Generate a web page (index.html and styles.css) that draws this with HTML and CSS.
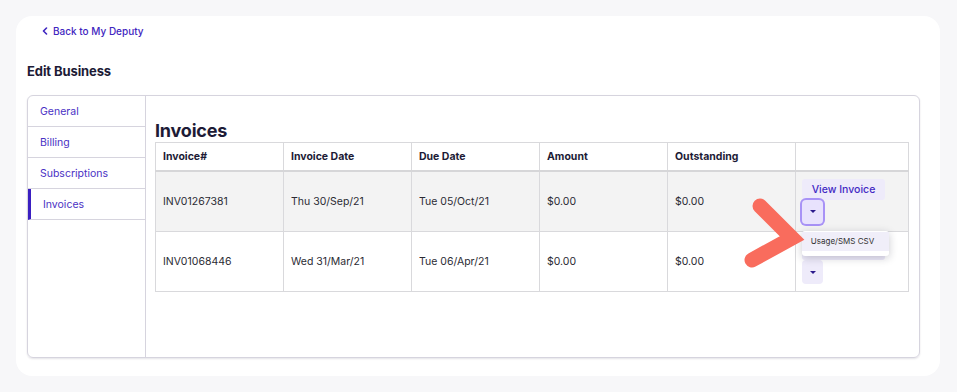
FILE: index.html
```html
<!DOCTYPE html>
<html lang="en">
<head>
    <meta charset="UTF-8">
    <meta name="viewport" content="width=device-width, initial-scale=1.0">
    <title>Edit Business - Invoices</title>
    <link rel="stylesheet" href="styles.css">
</head>
<body>
    <div class="page">
        <a class="back-link" href="#">
            <svg class="back-icon" width="6" height="8" viewBox="0 0 6 8"><path d="M4.5 1 L1.5 4 L4.5 7" fill="none" stroke="currentColor" stroke-width="1.6" stroke-linecap="round" stroke-linejoin="round"/></svg>
            Back to My Deputy
        </a>

        <h2 class="page-title">Edit Business</h2>

        <div class="panel">
            <nav class="side-nav">
                <a class="nav-item" href="#">General</a>
                <a class="nav-item" href="#">Billing</a>
                <a class="nav-item" href="#">Subscriptions</a>
                <a class="nav-item active" href="#">Invoices</a>
            </nav>

            <section class="content">
                <h1 class="section-title">Invoices</h1>
                <table class="invoice-table">
                    <thead>
                        <tr>
                            <th>Invoice#</th>
                            <th>Invoice Date</th>
                            <th>Due Date</th>
                            <th>Amount</th>
                            <th>Outstanding</th>
                            <th></th>
                        </tr>
                    </thead>
                    <tbody>
                        <tr class="striped">
                            <td>INV01267381</td>
                            <td>Thu 30/Sep/21</td>
                            <td>Tue 05/Oct/21</td>
                            <td>$0.00</td>
                            <td>$0.00</td>
                            <td class="actions-cell">
                                <div class="actions">
                                    <button class="btn-view">View Invoice</button>
                                    <div class="dropdown">
                                        <button class="btn-caret focused"><span class="caret"></span></button>
                                        <div class="dropdown-menu">
                                            <div class="menu-item">Usage/SMS CSV</div>
                                        </div>
                                    </div>
                                </div>
                            </td>
                        </tr>
                        <tr>
                            <td>INV01068446</td>
                            <td>Wed 31/Mar/21</td>
                            <td>Tue 06/Apr/21</td>
                            <td>$0.00</td>
                            <td>$0.00</td>
                            <td class="actions-cell">
                                <div class="actions">
                                    <!-- covered by the open menu above -->
                                    <button class="btn-view" aria-label="View Invoice"></button>
                                    <div class="dropdown">
                                        <button class="btn-caret"><span class="caret"></span></button>
                                    </div>
                                </div>
                            </td>
                        </tr>
                    </tbody>
                </table>
            </section>
        </div>
    </div>

    <!-- annotation pointing at the dropdown -->
    <svg class="annotation" width="957" height="392" viewBox="0 0 957 392">
        <path d="M760 206 L792 238 L752 260" fill="none" stroke="#f96c5d" stroke-width="15" stroke-linecap="round" stroke-linejoin="miter"/>
    </svg>
</body>
</html>
```

FILE: styles.css
```css
* {
    margin: 0;
    padding: 0;
    box-sizing: border-box;
    font-family: Inter, 'Liberation Sans', Arial, sans-serif;
}

body {
    background-color: #f7f7f9;
    color: #333;
    padding: 16px 17px 16px 16px;
    position: relative;
}

.page {
    background: white;
    border-radius: 16px;
    height: 360px;
    padding: 8px 20px 0 11px;
}

.back-link {
    display: flex;
    align-items: center;
    gap: 5px;
    height: 14px;
    margin-left: 15px;
    font-size: 10px;
    font-weight: 500;
    color: #3f26c0;
    text-decoration: none;
}

.page-title {
    margin-top: 24px;
    font-size: 13px;
    line-height: 18px;
    font-weight: 700;
    color: #1d1b36;
    letter-spacing: -0.1px;
}

.panel {
    display: flex;
    margin-top: 15px;
    height: 263px;
    border: 1px solid #d6d4de;
    border-radius: 6px;
    box-shadow: 0 1px 2px rgba(30, 27, 60, 0.12);
}

.side-nav {
    width: 118px;
    flex-shrink: 0;
    border-right: 1px solid #d6d4de;
    display: flex;
    flex-direction: column;
}

.nav-item {
    display: flex;
    align-items: center;
    height: 31px;
    padding-left: 12px;
    border-bottom: 1px solid #d6d4de;
    font-size: 10.5px;
    color: #4a31c4;
    text-decoration: none;
}

.nav-item.active {
    border-left: 3px solid #3a1fc1;
}

.content {
    flex: 1;
    padding: 24px 10px 0 9px;
}

.section-title {
    font-size: 18px;
    line-height: 22px;
    font-weight: 700;
    color: #1d1b36;
    letter-spacing: -0.2px;
}

.invoice-table {
    width: 754px;
    border-collapse: collapse;
    table-layout: fixed;
    font-size: 10.5px;
}

.invoice-table th,
.invoice-table td {
    border: 1px solid #d9d9dc;
    text-align: left;
    padding: 0 7px;
}

.invoice-table th {
    height: 28px;
    font-weight: 700;
    color: #1d1b36;
    border-bottom: 2px solid #d6d6d8;
}

.invoice-table th:last-child {
    width: 113px;
}

.invoice-table td {
    height: 60px;
    color: #2b2b33;
}

.striped td {
    background: #f3f3f3;
    height: 61px;
}

.actions-cell {
    vertical-align: top;
    padding: 7px 6px !important;
}

.actions {
    display: flex;
    flex-direction: column;
    align-items: flex-start;
}

.btn-view {
    width: 83px;
    height: 21px;
    border: none;
    border-radius: 3px;
    background: #eeebfa;
    color: #4329c4;
    font-size: 10.5px;
    font-weight: 500;
    cursor: pointer;
}

.dropdown {
    position: relative;
}

.btn-caret {
    display: flex;
    align-items: center;
    justify-content: center;
    width: 21px;
    height: 24px;
    border: none;
    border-radius: 4px;
    background: #eeebfa;
    cursor: pointer;
}

.btn-caret.focused {
    background: #e8e2fd;
    box-shadow: 0 0 0 2px #a892f6;
}

.caret {
    width: 0;
    height: 0;
    border-left: 3px solid transparent;
    border-right: 3px solid transparent;
    border-top: 3px solid #2b1a8c;
}

.dropdown-menu {
    position: absolute;
    top: 31px;
    left: 0;
    width: 87px;
    height: 25px;
    padding-top: 1px;
    background: white;
    border-radius: 3px;
    box-shadow: 0 2px 8px rgba(20, 20, 40, 0.22);
    z-index: 2;
}

.menu-item {
    height: 19px;
    display: flex;
    align-items: center;
    justify-content: center;
    padding-right: 6px;
    background: #f0eef9;
    font-size: 8px;
    color: #333;
}

.annotation {
    position: absolute;
    top: 0;
    left: 0;
    pointer-events: none;
    z-index: 5;
}
```
